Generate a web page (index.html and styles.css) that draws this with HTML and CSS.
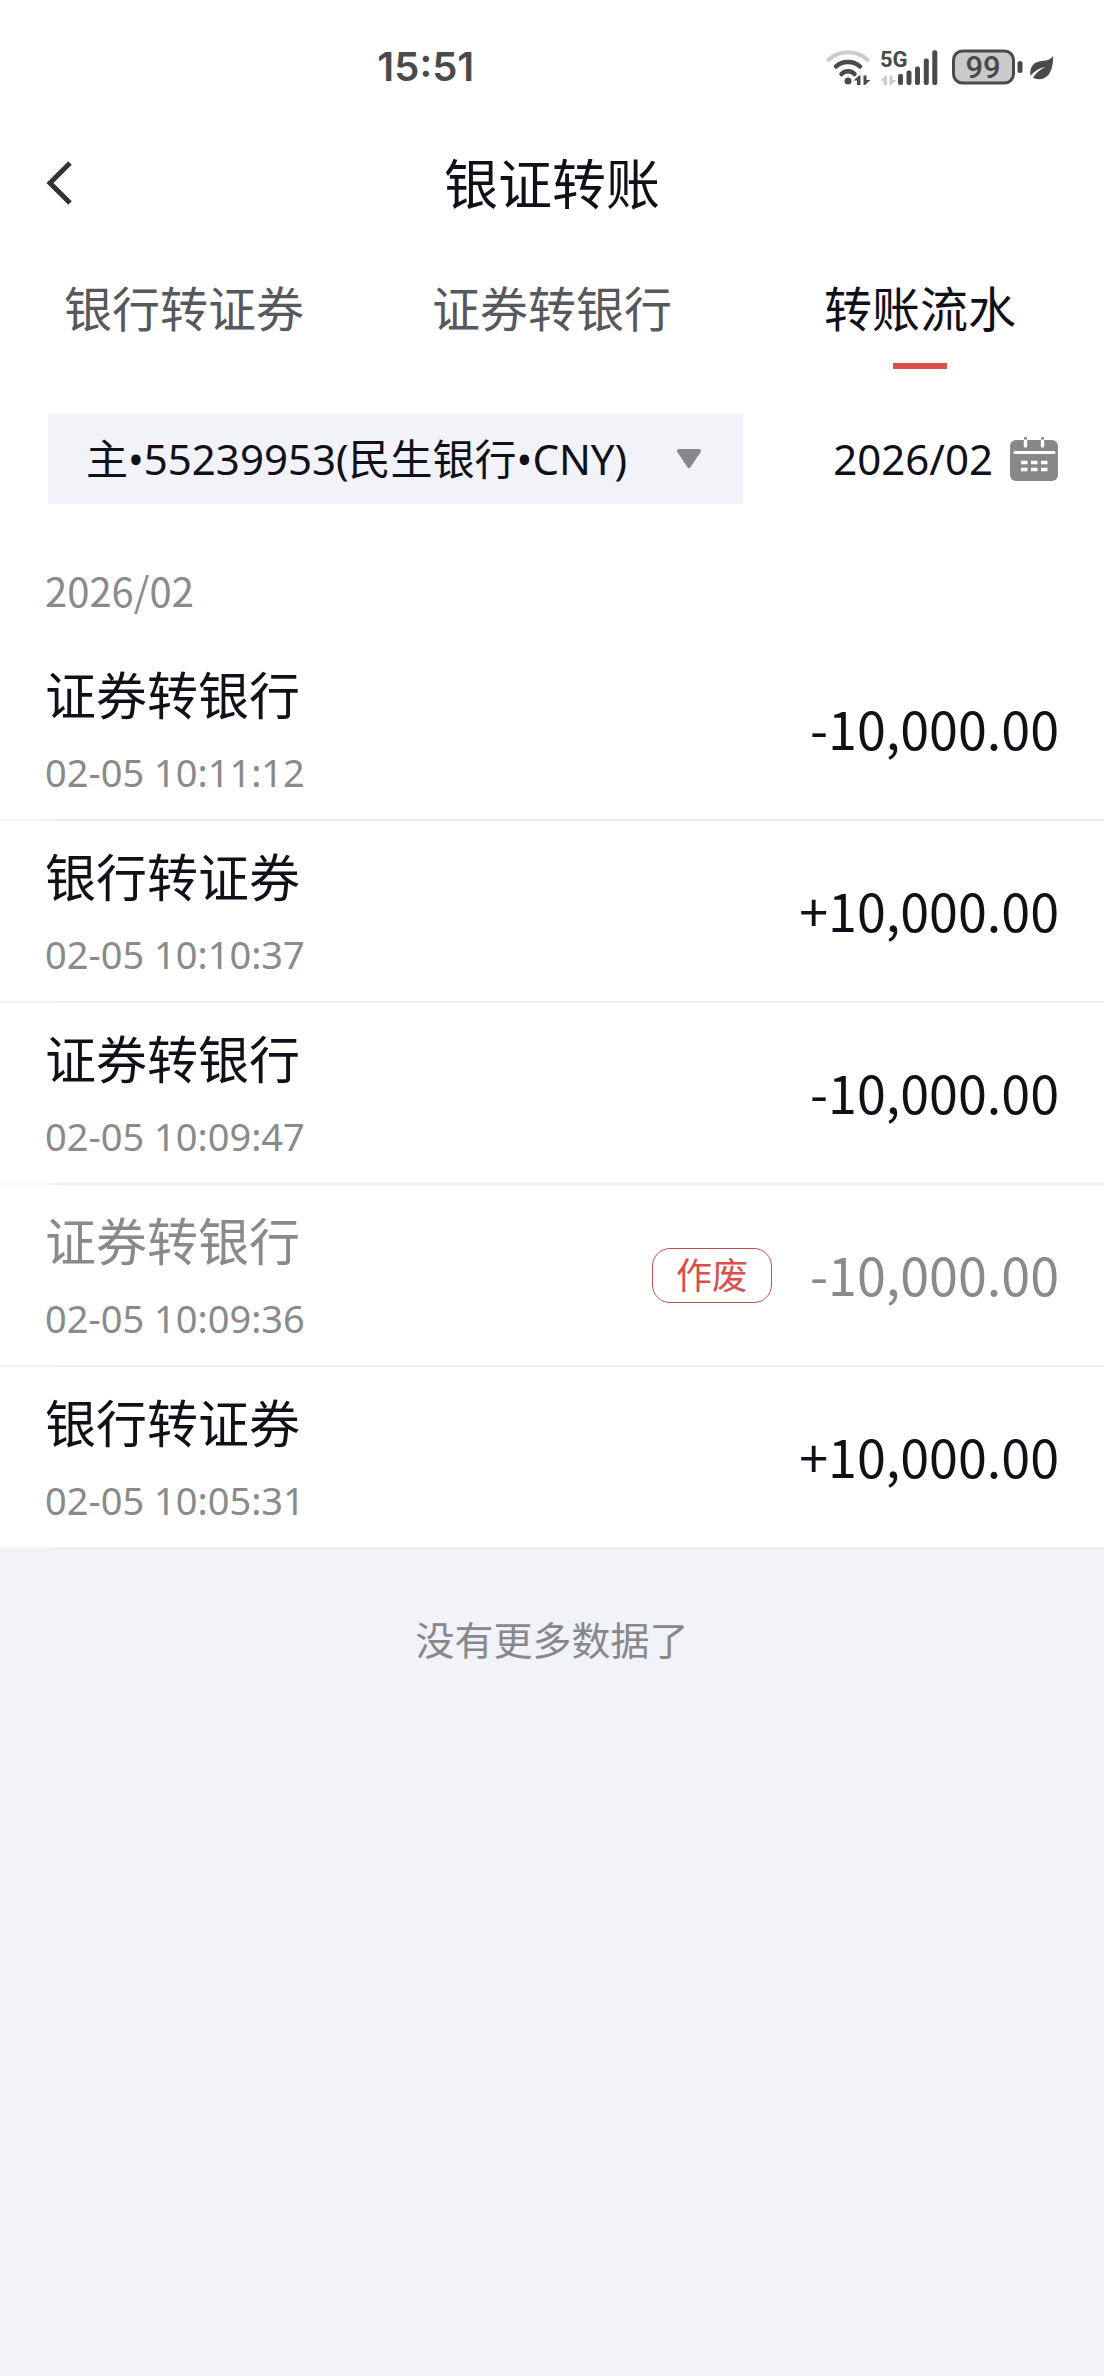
FILE: index.html
```html
<!DOCTYPE html>
<html lang="zh-CN">
<head>
<meta charset="utf-8">
<meta name="viewport" content="width=device-width, initial-scale=1">
<title>银证转账</title>
<link rel="stylesheet" href="styles.css">
</head>
<body>
<div class="sheet">
  <div class="status">
    <time class="clock">15:51</time>
    <div class="status-icons">
      <svg class="wifi" width="48" height="40" viewBox="0 0 48 40" aria-hidden="true">
        <g fill="none" stroke-linecap="round">
          <path d="M4.500 13C15 2.500 33 2.500 43.500 13" stroke="#cdcdcd" stroke-width="4"/>
          <path d="M12 19.500C18 13.500 30 13.500 36 19.500" stroke="#4a4a4a" stroke-width="4.500"/>
          <path d="M17.500 27C21 23.300 27 23.300 30.500 27" stroke="#4a4a4a" stroke-width="4.500"/>
        </g>
        <circle cx="24" cy="34" r="3.500" fill="#4a4a4a"/>
        <path d="M29.500 33.500L35 28.500H36.500V38H33V33.500ZM39.500 28.500H42.500V33H46.500L41 38H39.500Z" fill="#4a4a4a"/>
      </svg>
      <svg class="signal" width="60" height="40" viewBox="0 0 60 40" aria-hidden="true">
        <text class="network" x="0" y="20">5G</text>
        <path d="M0 33.500L5.500 28.500H7V38H3.500V33.500ZM9.500 28.500H12.500V33H16.500L11 38H9.500Z" fill="#cdcdcd"/>
        <g fill="#4a4a4a">
          <rect x="18" y="27" width="5" height="11" rx="2"/>
          <rect x="26.500" y="23.500" width="5" height="14.500" rx="2"/>
          <rect x="35" y="19.500" width="5" height="18.500" rx="2"/>
          <rect x="43.800" y="11.500" width="5" height="26.500" rx="2"/>
          <rect x="52.300" y="3.300" width="5" height="34.700" rx="2"/>
        </g>
      </svg>
      <svg class="battery" width="74" height="40" viewBox="0 0 74 40" aria-hidden="true">
        <rect x="3.500" y="4" width="60" height="32" rx="9" fill="#cacaca" stroke="#4a4a4a" stroke-width="3"/>
        <rect x="67.500" y="14" width="5" height="12" rx="2.500" fill="#4a4a4a"/>
        <text class="charge" x="33" y="31">99</text>
      </svg>
      <svg class="leaf" width="28" height="30" viewBox="0 0 28 30" aria-hidden="true">
        <path d="M25 4C25.500 17 21 27 11.500 27.200C8.500 27.300 6.500 26.500 5 25.500C8 21 12 17.500 17.500 15C11 16 6 19.500 2.500 24C1 15 6 9.500 14 9C19 8.700 22.500 7.500 25 4Z" fill="#4a4a4a"/>
      </svg>
    </div>
  </div>

  <header class="header">
    <button class="back" type="button" aria-label="返回">
      <svg width="30" height="46" viewBox="0 0 30 46" aria-hidden="true">
        <path d="M26 3L6 23L26 43" fill="none" stroke="#333" stroke-width="5"/>
      </svg>
    </button>
    <h1 class="title">银证转账</h1>
  </header>

  <nav class="tabs">
    <a class="tab" href="#bank-in">银行转证券</a>
    <a class="tab" href="#bank-out">证券转银行</a>
    <a class="tab tab-active" href="#history" aria-current="page">转账流水</a>
  </nav>

  <div class="filters">
    <div class="account">
      <select class="account-select" aria-label="银行账户">
        <option>主•55239953(民生银行•CNY)</option>
      </select>
      <svg class="caret" width="28" height="22" viewBox="0 0 28 22" aria-hidden="true">
        <path d="M4 3H24L14 18Z" fill="#88888c" stroke="#88888c" stroke-width="4" stroke-linejoin="round"/>
      </svg>
    </div>
    <button class="month" type="button">
      <span>2026/02</span>
      <svg width="50" height="46" viewBox="0 0 50 46" aria-hidden="true">
        <rect x="1" y="4" width="48" height="41" rx="6" fill="#88888b"/>
        <rect x="15" y="1" width="3" height="5" rx="1" fill="#88888b"/>
        <rect x="32" y="1" width="3" height="5" rx="1" fill="#88888b"/>
        <path d="M16.500 5V10M33.500 5V10" stroke="#fff" stroke-width="3.500" stroke-linecap="round"/>
        <path d="M6 16.500H45" stroke="#fff" stroke-width="3" stroke-linecap="round"/>
        <path d="M12 26.500H18.500M22 26.500H28.500M32 26.500H38.500M12 33.500H18.500M22 33.500H28.500M32 33.500H38.500" stroke="#fff" stroke-width="3.600"/>
      </svg>
    </button>
  </div>

  <main>
    <h2 class="group">2026/02</h2>
    <ul class="records">
      <li class="record">
        <div class="info"><span class="kind">证券转银行</span><time class="when">02-05 10:11:12</time></div>
        <span class="amount">-10,000.00</span>
      </li>
      <li class="record">
        <div class="info"><span class="kind">银行转证券</span><time class="when">02-05 10:10:37</time></div>
        <span class="amount">+10,000.00</span>
      </li>
      <li class="record">
        <div class="info"><span class="kind">证券转银行</span><time class="when">02-05 10:09:47</time></div>
        <span class="amount">-10,000.00</span>
      </li>
      <li class="record record-void">
        <div class="info"><span class="kind">证券转银行</span><time class="when">02-05 10:09:36</time></div>
        <span class="badge">作废</span>
        <span class="amount">-10,000.00</span>
      </li>
      <li class="record">
        <div class="info"><span class="kind">银行转证券</span><time class="when">02-05 10:05:31</time></div>
        <span class="amount">+10,000.00</span>
      </li>
    </ul>
  </main>
</div>
<p class="end">没有更多数据了</p>
</body>
</html>
```

FILE: styles.css
```css
* {
  box-sizing: border-box;
}

body {
  margin: 0;
  background: #f2f3f8;
  color: #101018;
  font-family: "Noto Sans CJK SC", sans-serif;
}

h1,
h2,
p,
ul {
  margin: 0;
  padding: 0;
  font-weight: 400;
}

button,
select {
  padding: 0;
  border: 0;
  background: none;
  color: inherit;
  font: inherit;
}

svg {
  display: block;
  flex: none;
}

.sheet {
  background: #fff;
}

/* Status bar */
.status {
  display: flex;
  align-items: center;
  justify-content: space-between;
  height: 134px;
  padding: 0 48px 0 34%;
}

.clock {
  padding-left: 2px;
  color: #4a4a4a;
  font: 600 40px/48px Inter, sans-serif;
}

.status-icons {
  display: flex;
  align-items: center;
  gap: 8px;
}

.battery {
  margin-left: 2px;
}

.leaf {
  margin-left: -4px;
}

.network {
  fill: #4a4a4a;
  font: 700 22px "Liberation Sans Narrow", Roboto, sans-serif;
}

.charge {
  fill: #4a4a4a;
  font: 500 31px Roboto, sans-serif;
  text-anchor: middle;
}

/* Title bar */
.header {
  display: grid;
  grid-template-columns: 1fr auto 1fr;
  align-items: center;
  height: 98px;
  padding: 0 44px;
}

.back {
  justify-self: start;
}

.title {
  padding-bottom: 3px;
  font-size: 54px;
  line-height: 64px;
}

/* Tabs */
.tabs {
  display: grid;
  grid-template-columns: repeat(3, 1fr);
  padding: 42px 0 45px;
}

.tab {
  display: flex;
  flex-direction: column;
  align-items: center;
  gap: 25px;
  color: #58585c;
  font-size: 48px;
  line-height: 64px;
  text-decoration: none;
}

.tab::after {
  width: 54px;
  height: 6px;
  content: "";
}

.tab-active {
  color: #101018;
}

.tab-active::after {
  background: #d9504c;
}

/* Account and month filters */
.filters {
  display: flex;
  gap: 90px;
  padding: 0 45px 0 48px;
  font-family: "Noto Sans", "Noto Sans CJK SC", sans-serif;
  font-size: 42px;
}

.account {
  display: grid;
  flex: 1;
  align-items: center;
  min-width: 0;
  background: #f2f3f8;
}

.account-select,
.caret {
  grid-area: 1 / 1;
}

.account-select {
  width: 100%;
  height: 90px;
  padding: 0 80px 2px 38px;
  appearance: none;
}

.caret {
  justify-self: end;
  margin-right: 40px;
  pointer-events: none;
}

.month {
  display: flex;
  align-items: center;
  gap: 16px;
  line-height: 90px;
}

/* Transfer records */
.group {
  padding: 58px 45px 21px;
  color: #8a8a8a;
  font-size: 40px;
  line-height: 56px;
}

.records {
  list-style: none;
}

.record {
  display: flex;
  align-items: center;
  padding: 24px 45px 25px;
  background: linear-gradient(to right, #f5f5f5 45px, #ececec 60px) bottom / 100% 2px no-repeat;
}

.info {
  display: flex;
  flex: 1;
  flex-direction: column;
  gap: 25px;
}

.kind {
  font-size: 51px;
  line-height: 60px;
}

.when {
  color: #8a8a8a;
  font-family: "Noto Sans", sans-serif;
  font-size: 38px;
  line-height: 48px;
}

.amount {
  padding-bottom: 4px;
  font-size: 52px;
  line-height: 60px;
}

.record-void .kind,
.record-void .amount {
  color: #8a8a8a;
}

.badge {
  margin-right: 38px;
  padding: 0 23px 5px;
  border: 1px solid #c0504f;
  border-radius: 18px;
  color: #d9504c;
  font-size: 36px;
  line-height: 48px;
}

.end {
  padding: 61px 45px;
  color: #88888c;
  font-size: 39px;
  line-height: 56px;
  text-align: center;
}
```
